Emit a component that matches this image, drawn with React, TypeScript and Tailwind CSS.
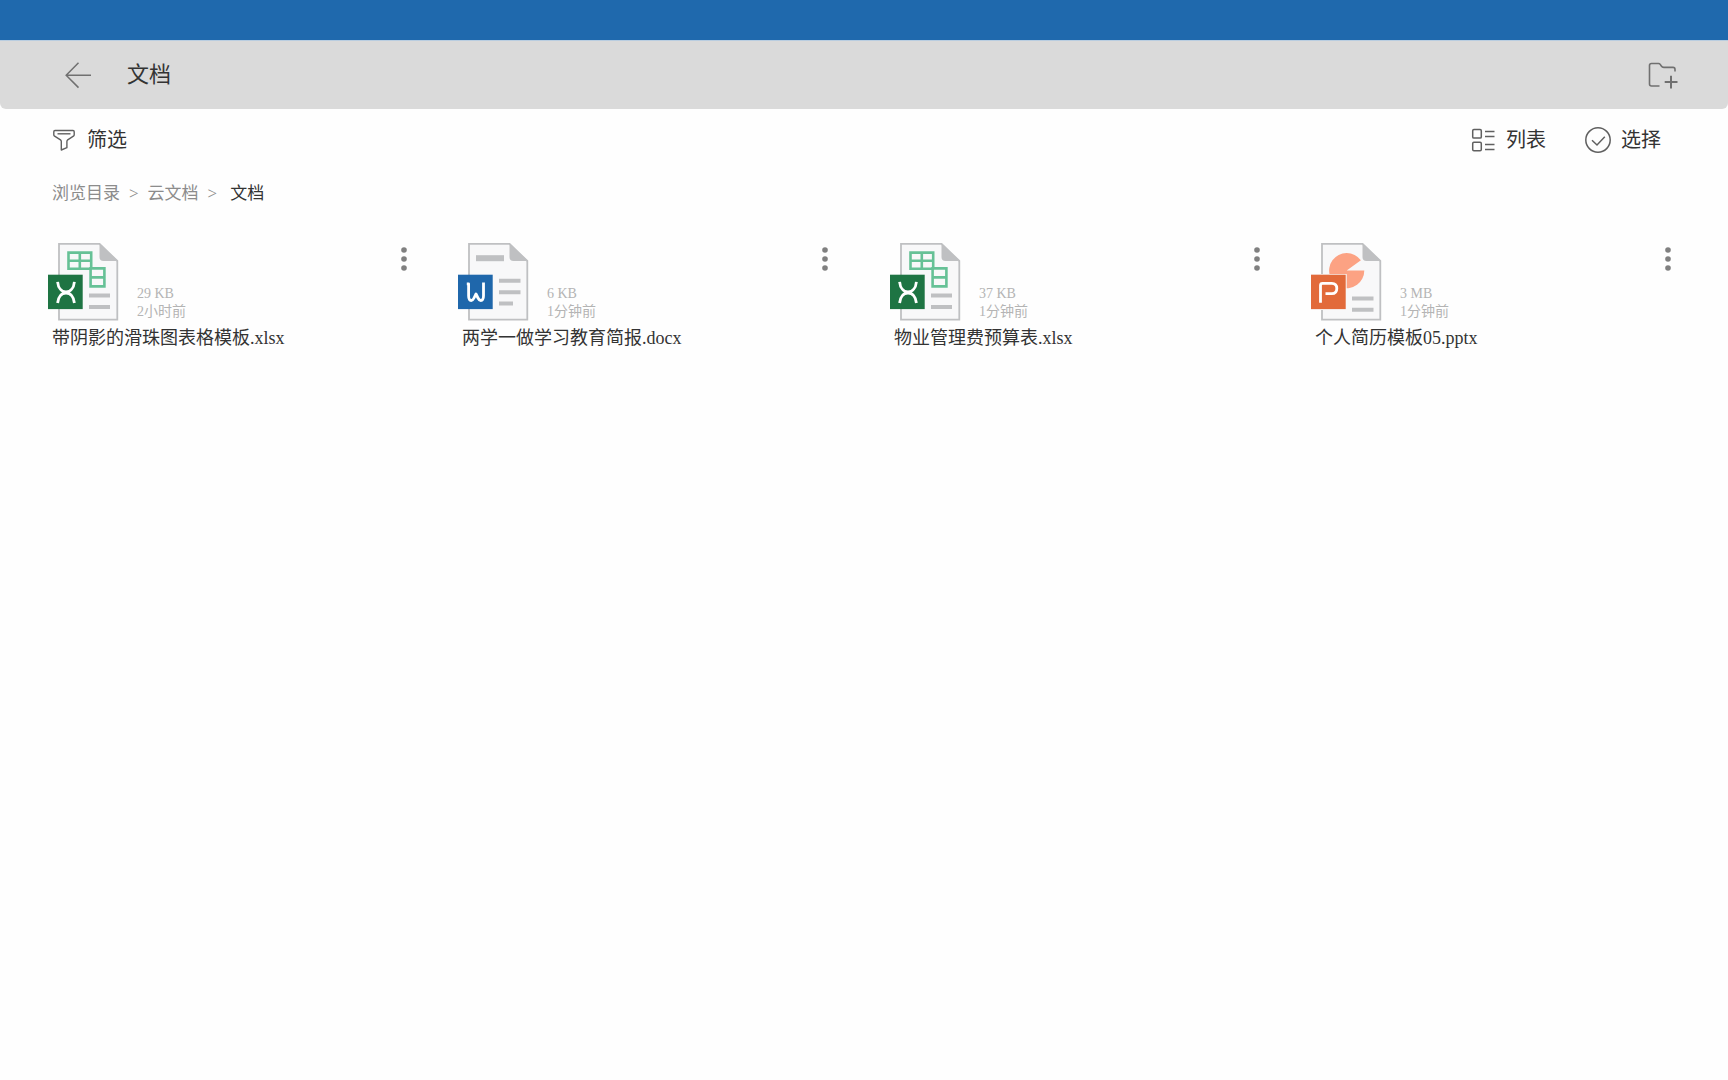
import type { ReactNode } from "react"

type FileKind = 'xlsx' | 'docx' | 'pptx'

interface CloudFile {
    id: string
    kind: FileKind
    name: string
    size: string
    modified: string
    spacing: string
}

const files: CloudFile[] = [
    { id: '1', kind: 'xlsx', name: '带阴影的滑珠图表格模板.xlsx', size: '29 KB', modified: '2小时前', spacing: 'pr-[46px]' },
    { id: '2', kind: 'docx', name: '两学一做学习教育简报.docx', size: '6 KB', modified: '1分钟前', spacing: 'pr-[57px]' },
    { id: '3', kind: 'xlsx', name: '物业管理费预算表.xlsx', size: '37 KB', modified: '1分钟前', spacing: 'pr-[46px]' },
    { id: '4', kind: 'pptx', name: '个人简历模板05.pptx', size: '3 MB', modified: '1分钟前', spacing: 'pr-0' },
]

const BackIcon = () => (
    <svg className="w-7 h-7" viewBox="0 0 28 28" fill="none" stroke="#707070" strokeWidth="1.5">
        <path d="M14.5 1.8 2.2 14.2 14.5 26.6M2.2 14.2H27" />
    </svg>
)

const NewFolderIcon = () => (
    <svg className="w-[30px] h-7" viewBox="0 0 30 28" fill="none" stroke="#707070" strokeWidth="1.6">
        <path d="M11.5 25H3.5Q1.5 25 1.5 23V4.5Q1.5 2.5 3.5 2.5H10.5Q11.6 2.5 12.2 3.4L13.3 5Q14.2 6.400 15.8 6.400H25Q27 6.400 27 8.400V10.5" />
        <path d="M23 14.8V27.5M16.7 21H29.5" strokeWidth="2" />
    </svg>
)

const FilterIcon = () => (
    <svg className="w-6 h-6" viewBox="0 0 24 24" fill="none" stroke="#606060" strokeWidth="1.4" strokeLinejoin="round">
        <path d="M3 2.5H21Q22.2 2.5 22.2 3.7V6.7Q22.2 7.6 21.4 8.1L15.7 11.9Q14.9 12.5 14.9 13.5V19.7L9.3 22V13.5Q9.3 12.5 8.5 11.9L2.6 8.1Q1.8 7.6 1.8 6.7V3.7Q1.8 2.5 3 2.5Z" />
        <path d="M5.5 5.8H18.5" />
    </svg>
)

const ListIcon = () => (
    <svg className="w-6 h-6" viewBox="0 0 24 24" fill="none" stroke="#606060" strokeWidth="1.5">
        <rect x="1.7" y="1.5" width="8.6" height="8.6" rx="1.2" />
        <rect x="1.7" y="14.2" width="8.6" height="8.6" rx="1.2" />
        <path d="M14 3.6H23.5M14 8.6H23.5M14 16.4H23.5M14 21.4H23.5" />
    </svg>
)

const SelectIcon = () => (
    <svg className="w-[26px] h-[26px]" viewBox="0 0 26 26" fill="none" stroke="#606060" strokeWidth="1.5">
        <circle cx="13" cy="13" r="12.2" />
        <path d="M7 13.2 12 18 19.8 9.7" />
    </svg>
)

const MoreIcon = () => (
    <svg className="w-4 h-7" viewBox="0 0 16 28" fill="#808080">
        <circle cx="8" cy="5" r="2.8" />
        <circle cx="8" cy="14" r="2.8" />
        <circle cx="8" cy="23" r="2.8" />
    </svg>
)

const SheetArt = () => (
    <>
        <g fill="#f8f8f9" stroke="#66c196" strokeWidth="2.6">
            <path d="M20.5 9.6H43.2V25.8H20.5ZM31.8 9.6V25.8M20.5 17.7H43.2" />
            <path d="M42.6 25.4H56.4V43.4H42.6ZM42.6 34.4H56.4" />
        </g>
        <path d="M41 52.5H62M41 64H62" stroke="#bfc0c2" strokeWidth="4" />
        <rect y="31.7" width="34.7" height="34.4" fill="#1e7443" />
        <path d="M9.6 38.8C10.2 45 13.6 48.9 18 48.9S25.800 45 26.4 38.800M9.6 60C10.2 53.8 13.6 50 18 50S25.8 53.8 26.4 60" fill="none" stroke="#fff" strokeWidth="2.8" />
    </>
)

const WordArt = () => (
    <>
        <path d="M18 15.2H46" stroke="#bfc0c2" strokeWidth="6" />
        <path d="M41 37.8H62.5M41 49.2H62.5M41 60.5H55" stroke="#bfc0c2" strokeWidth="4" />
        <rect y="31.7" width="34.7" height="34.4" fill="#1f67ab" />
        <path d="M8.8 40.8H10.6V52.8Q10.6 57.5 13.2 57.5Q14.8 57.500 16 55L18 51L20 55Q21.2 57.5 22.8 57.5Q25.5 57.5 25.5 52.8V39.500" fill="none" stroke="#fff" strokeWidth="2.8" strokeLinejoin="round" />
    </>
)

const SlideArt = () => (
    <>
        <path d="M35.7 27.6 49.9 17.2A17.6 17.6 0 1 0 53.3 27.6Z" fill="#fca283" />
        <path d="M41 55.500H62.5M41 66.8H62.5" stroke="#bfc0c2" strokeWidth="4" />
        <rect x="-1" y="31" width="36.7" height="36" fill="#f8f8f9" />
        <rect y="31.7" width="34.7" height="34.4" fill="#e26a3a" />
        <path d="M9.5 59.8V42.400Q9.5 40.400 11.5 40.400H20.800Q25.800 40.400 25.800 45.5Q25.800 50.700 20.800 50.700H14.500" fill="none" stroke="#fff" strokeWidth="2.8" />
    </>
)

const artwork: Record<FileKind, ReactNode> = {
    xlsx: <SheetArt />,
    docx: <WordArt />,
    pptx: <SlideArt />,
}

const FileIcon = ({ kind }: { kind: FileKind }) => (
    <svg className="w-[72px] h-[78px] shrink-0" viewBox="0 0 72 78">
        <path d="M11 .8H51.5L69.3 18V76.7H11Z" fill="#f8f8f9" stroke="#bfc0c2" strokeWidth="1.8" />
        <path d="M51.5 .8V14Q51.5 18 55.5 18H70Z" fill="#bfc0c2" />
        {artwork[kind]}
    </svg>
)

const FileCard = ({ file }: { file: CloudFile }) => {
    return (
        <li className={file.spacing}>
            <div className="flex items-start justify-between">
                <div className="flex items-end gap-[17px]">
                    <FileIcon kind={file.kind} />
                    <div className="text-sm/[18px] text-[#b4b4b4]">
                        <p>{file.size}</p>
                        <p>{file.modified}</p>
                    </div>
                </div>
                <button aria-label={`更多 ${file.name}`} className="mt-0.5 cursor-pointer">
                    <MoreIcon />
                </button>
            </div>
            <p className="pl-1 mt-[3px] text-lg/7 whitespace-nowrap">{file.name}</p>
        </li>
    )
}

const App = () => {
    return (
        <div className="min-h-screen bg-[#fefefe] text-[#333333] font-['Liberation_Serif','Noto_Sans_CJK_SC',serif]" lang="zh-CN">
            <div className="h-10 bg-[#1f69ad]" />
            <header className="flex items-center justify-between pl-16 pr-[50px] border-t border-[#b9cde0] rounded-b-md bg-[#dadada] h-[69px]">
                <div className="flex items-center gap-[35px]">
                    <button aria-label="返回" className="cursor-pointer">
                        <BackIcon />
                    </button>
                    <h1 className="text-[22px]/8">文档</h1>
                </div>
                <button aria-label="新建文件夹" className="cursor-pointer">
                    <NewFolderIcon />
                </button>
            </header>

            <main>
                <div className="flex items-center justify-between pl-[52px] pr-[67px] pt-[17px] text-xl/7">
                    <button className="flex items-center gap-[11px] cursor-pointer">
                        <FilterIcon />
                        <span>筛选</span>
                    </button>
                    <div className="flex items-center gap-[39px]">
                        <button className="flex items-center gap-[11px] cursor-pointer">
                            <ListIcon />
                            <span>列表</span>
                        </button>
                        <button className="flex items-center gap-[10px] cursor-pointer">
                            <SelectIcon />
                            <span>选择</span>
                        </button>
                    </div>
                </div>

                <nav aria-label="路径" className="flex items-center pl-[52px] mt-[26px] text-[17px]/7 text-[#8c8c8c]">
                    <a href="#">浏览目录</a>
                    <span className="mx-[9px]">&gt;</span>
                    <a href="#">云文档</a>
                    <span className="ml-[9px] mr-[13px]">&gt;</span>
                    <span className="text-[#333333]">文档</span>
                </nav>

                <ul className="grid grid-cols-[410fr_432fr_421fr_365fr] pl-12 pr-[52px] mt-[35px]">
                    {files.map((file) => (
                        <FileCard key={file.id} file={file} />
                    ))}
                </ul>
            </main>
        </div>
    )
}

export default App
